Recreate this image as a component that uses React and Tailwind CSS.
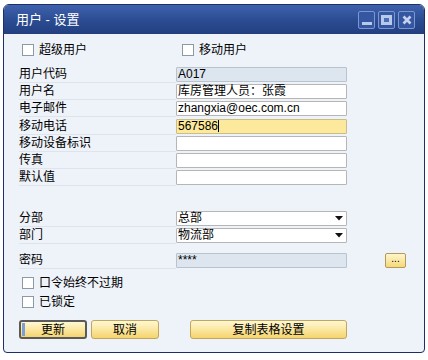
const FONT = { fontFamily: '"Liberation Sans", "Noto Sans CJK SC", sans-serif' };

function Check({ label }) {
  return (
    <div className="flex items-center gap-[5px]">
      <div className="w-[12px] h-[12px] bg-white border border-[#8d99a6]" />
      <span className="text-[12px] leading-[14px] text-black">{label}</span>
    </div>
  );
}

function Field({ label, value, kind = "text", caret }) {
  const bg =
    kind === "disabled"
      ? "bg-[#dde6ef] border-[#b9c3cd]"
      : kind === "active"
      ? "bg-[#fde99b] border-[#c9bd8c]"
      : "bg-white border-[#b6b6b6]";
  return (
    <div className="flex h-[17px] items-center">
      <div className="w-[157px] h-[17px] flex items-center border-b border-[#dfe4ec] text-[12px] leading-[14px] text-black">
        {label}
      </div>
      <div
        className={`w-[171px] h-[15px] border rounded-[1px] flex items-center pl-[1px] text-[12px] leading-[13px] text-black ${bg}`}
      >
        <span>{value}</span>
        {caret && <span className="w-px h-[12px] bg-black" />}
        {kind === "select" && (
          <svg className="ml-auto mr-[3px]" width="8" height="5" viewBox="0 0 8 5">
            <path d="M0 0 H8 L4 4.5 Z" fill="#111" />
          </svg>
        )}
      </div>
    </div>
  );
}

function Btn({ children, w, focused }) {
  return (
    <div
      className={`relative ${w} h-[19px] rounded-[3px] flex items-center justify-center text-[12px] leading-[14px] text-black bg-gradient-to-b from-[#fff8d2] via-[#fbe7a0] to-[#f4d46e] ${
        focused ? "border-2 border-[#5a5a5a]" : "border border-[#c2a65c]"
      }`}
    >
      {focused && <div className="absolute left-[1px] top-[1px] bottom-[1px] w-[3px] bg-[#7d9fd6]" />}
      {children}
    </div>
  );
}

export default function App() {
  return (
    <div className="w-[428px] h-[360px] bg-white pt-[4px] pl-[3px]" style={FONT}>
      <div className="w-[422px] h-[349px] flex flex-col rounded-t-[6px] rounded-b-[4px] border border-[#1c2f66] overflow-hidden bg-[#eef2f9]">
        <div className="h-[29px] shrink-0 flex items-center justify-between pl-[12px] pr-[9px] bg-gradient-to-b from-[#3f62ad] via-[#2c4d93] to-[#223f80]">
          <span className="text-[13px] leading-[15px] text-white">用户 - 设置</span>
          <div className="flex gap-[3px]">
            <div className="w-[17px] h-[18px] border border-[#7d96cf] bg-[#3557a2] rounded-[2px] flex items-end justify-center pb-[3px]">
              <div className="w-[10px] h-[3px] bg-[#b9c9ea]" />
            </div>
            <div className="w-[17px] h-[18px] border border-[#7d96cf] bg-[#3557a2] rounded-[2px] flex items-center justify-center">
              <div className="w-[11px] h-[10px] border-[3px] border-[#b9c9ea] bg-[#4d6db4]" />
            </div>
            <div className="w-[17px] h-[18px] border border-[#7d96cf] bg-[#3557a2] rounded-[2px] flex items-center justify-center">
              <svg width="10" height="10" viewBox="0 0 10 10">
                <path d="M1.5 1.5 L8.5 8.5 M8.5 1.5 L1.5 8.5" stroke="#c4d2ee" strokeWidth="2.6" />
              </svg>
            </div>
          </div>
        </div>

        <div className="flex flex-col pl-[15px] pt-[9px]">
          <div className="flex h-[14px] items-center pl-[3px]">
            <div className="w-[160px]">
              <Check label="超级用户" />
            </div>
            <Check label="移动用户" />
          </div>

          <div className="flex flex-col gap-[0.2px] mt-[9px]">
            <Field label="用户代码" value="A017" kind="disabled" />
            <Field label="用户名" value="库房管理人员：张霞" />
            <Field label="电子邮件" value="zhangxia@oec.com.cn" />
            <Field label="移动电话" value="567586" kind="active" caret />
            <Field label="移动设备标识" value="" />
            <Field label="传真" value="" />
            <Field label="默认值" value="" />
          </div>

          <div className="flex flex-col mt-[24px]">
            <Field label="分部" value="总部" kind="select" />
            <Field label="部门" value="物流部" kind="select" />
          </div>

          <div className="flex items-center mt-[8px]">
            <Field label="密码" value="****" kind="disabled" />
            <div className="ml-[38px] w-[21px] h-[15px] rounded-[2px] border border-[#b19b5c] bg-gradient-to-b from-[#fff6cc] to-[#f5d878] flex items-center justify-center text-[10px] leading-[8px] text-black pb-[3px]">
              ...
            </div>
          </div>

          <div className="flex flex-col gap-[5px] mt-[7px] pl-[3px]">
            <Check label="口令始终不过期" />
            <Check label="已锁定" />
          </div>

          <div className="flex items-center mt-[11px]">
            <Btn w="w-[68px]" focused>更新</Btn>
            <div className="ml-[4px]">
              <Btn w="w-[68px]">取消</Btn>
            </div>
            <div className="ml-[31px]">
              <Btn w="w-[157px]">复制表格设置</Btn>
            </div>
          </div>
        </div>
      </div>
    </div>
  );
}
